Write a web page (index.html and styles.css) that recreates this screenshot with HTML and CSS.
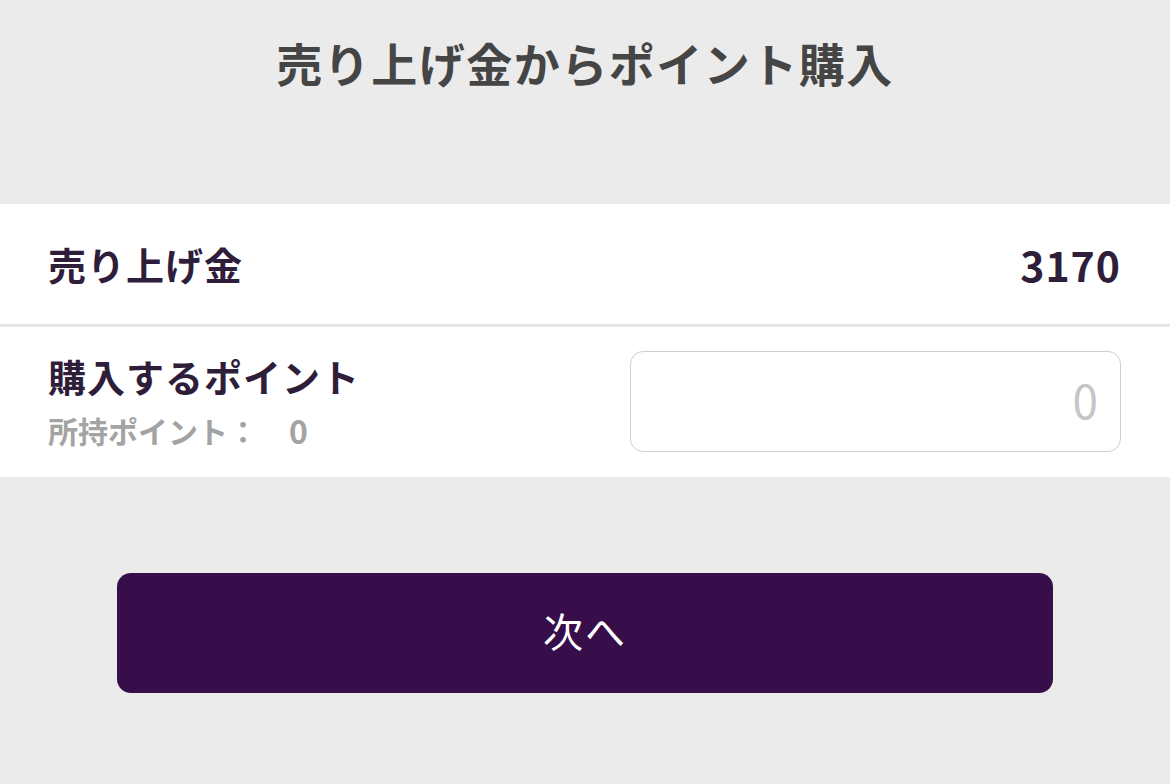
FILE: index.html
```html
<!DOCTYPE html>
<html lang="ja">
<head>
<meta charset="utf-8">
<title>売り上げ金からポイント購入</title>
<link rel="stylesheet" href="styles.css">
</head>
<body>
<header class="header">
  <h1 class="title">売り上げ金からポイント購入</h1>
</header>
<section class="panel">
  <div class="row row-sales">
    <span class="label">売り上げ金</span>
    <span class="amount">3170</span>
  </div>
  <div class="row row-points">
    <div class="points-left">
      <div class="label">購入するポイント</div>
      <div class="owned"><span>所持ポイント：</span><span class="owned-num">0</span></div>
    </div>
    <input class="points-input" type="text" placeholder="0">
  </div>
</section>
<div class="actions">
  <button class="next-btn" type="button">次へ</button>
</div>
</body>
</html>
```
FILE: styles.css
```css
html, body {
  margin: 0;
  padding: 0;
}
body {
  background: #ebebeb;
  font-family: "Noto Sans CJK JP", "Noto Sans", sans-serif;
  width: 1170px;
  height: 784px;
  overflow: hidden;
}
.header {
  height: 204px;
  box-sizing: border-box;
  padding-top: 32px;
}
.title {
  margin: 0;
  text-align: center;
  font-size: 46px;
  line-height: 60px;
  font-weight: 700;
  color: #454545;
  letter-spacing: 1.5px;
}
.panel {
  background: #ffffff;
}
.row {
  display: flex;
  box-sizing: border-box;
  padding: 0 49px 0 48px;
}
.row-sales {
  height: 123px;
  align-items: center;
  justify-content: space-between;
  border-bottom: 3px solid #e6e6e6;
}
.label {
  font-size: 38px;
  font-weight: 700;
  color: #2e1e3a;
  line-height: 48px;
  letter-spacing: 1px;
}
.amount {
  font-size: 41px;
  font-weight: 700;
  color: #2e1e3a;
  line-height: 48px;
  letter-spacing: 1px;
}
.row-points {
  height: 150px;
  align-items: flex-start;
  justify-content: space-between;
  padding-top: 25px;
}
.points-left {
  display: flex;
  flex-direction: column;
  gap: 10px;
}
.owned {
  font-size: 30px;
  line-height: 40px;
  font-weight: 700;
  color: #a3a3a3;
  display: flex;
  gap: 31px;
}
.owned-num {
  font-size: 32px;
}
.points-input {
  width: 491px;
  height: 101px;
  box-sizing: border-box;
  margin-top: -1px;
  border: 1px solid #cfcfcf;
  border-radius: 13px;
  background: #fff;
  padding: 0 22px 6px 0;
  text-align: right;
  font-family: "Noto Sans CJK JP", "Noto Sans", sans-serif;
  font-size: 46px;
  font-weight: 400;
  color: #333;
  outline: none;
}
.points-input::placeholder {
  color: #c6c6c6;
}
.actions {
  padding: 96px 0 0 117px;
}
.next-btn {
  width: 936px;
  height: 120px;
  border: none;
  border-radius: 14px;
  background: #370e4a;
  color: #ffffff;
  font-family: "Noto Sans CJK JP", "Noto Sans", sans-serif;
  font-size: 40px;
  font-weight: 400;
  letter-spacing: 2px;
  padding: 0 0 6px 0;
  cursor: pointer;
}
```
